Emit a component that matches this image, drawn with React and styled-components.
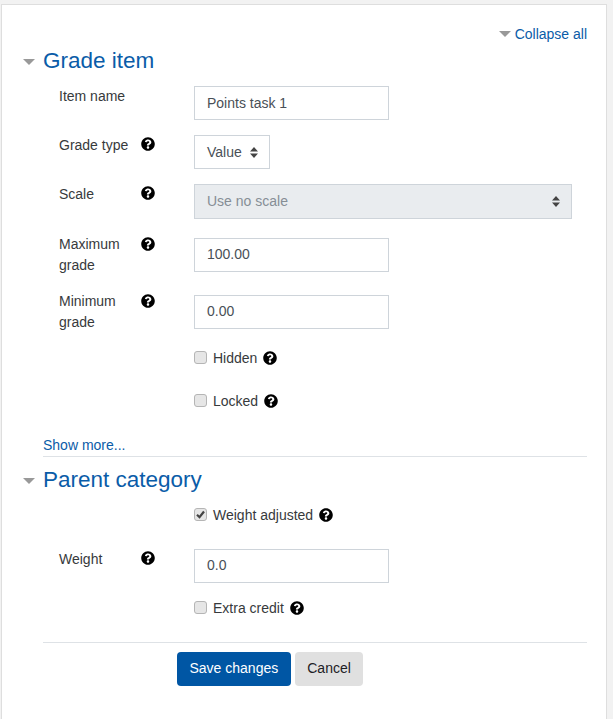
import React from "react";
import styled, { createGlobalStyle } from "styled-components";
import { FaQuestionCircle } from "react-icons/fa";

const Global = createGlobalStyle`
  html, body { margin: 0; padding: 0; background: #f2f2f2; height: 100%; overflow: hidden; }
  body { font-family: "Liberation Sans", Arial, sans-serif; font-size: 14px; color: #373a3c; }
`;

const Card = styled.form`
  margin: 4px 6px 0 1px;
  height: 760px;
  box-sizing: border-box;
  background: #fff;
  border: 1px solid #dedede;
  padding: 0 19px 0 41px;
`;

const CollapseRow = styled.div`
  display: flex;
  justify-content: flex-end;
  align-items: center;
  gap: 4px;
  height: 16px;
  padding-top: 21px;
`;

const Link = styled.a`
  display: block;
  color: #0a5ca8;
  line-height: 16px;
  margin-top: ${(p) => p.$mt || 0}px;
`;

const Caret = styled.span`
  display: inline-block;
  width: 0;
  height: 0;
  border-left: 6px solid transparent;
  border-right: 6px solid transparent;
  border-top: 6px solid #999;
`;

const SectionHeader = styled.div`
  position: relative;
  height: 27px;
  margin-top: ${(p) => p.$mt}px;
  display: flex;
  align-items: center;
`;

const SectionCaret = styled(Caret)`
  position: absolute;
  left: -20px;
  top: 50%;
  margin-top: -2px;
`;

const Title = styled.h3`
  margin: 0;
  font-size: 22.5px;
  font-weight: 400;
  line-height: 27px;
  color: #0a5ca8;
`;

const Row = styled.div`
  display: grid;
  grid-template-columns: 82px 1fr;
  padding-left: 16px;
  margin-top: ${(p) => p.$mt || 0}px;
`;

const LabelCell = styled.div`
  position: relative;
  line-height: 21px;
  width: 70px;
  margin-top: ${(p) => (p.$twoLine ? -4 : 0)}px;
`;

const HelpSlot = styled.span`
  position: absolute;
  left: 82px;
  top: ${(p) => (p.$twoLine ? 3 : 2)}px;
  display: flex;
`;

const Control = styled.div`
  grid-column: 2;
  margin-left: 53px;
  display: flex;
  align-items: flex-start;
`;

const HelpIcon = styled(FaQuestionCircle)`
  width: 14px;
  height: 14px;
  color: #000;
  display: block;
`;

const Input = styled.div`
  box-sizing: border-box;
  width: 195px;
  height: 34px;
  border: 1px solid #ced4da;
  padding: 0 12px;
  line-height: ${(p) => (p.$tight ? 30 : 32)}px;
  color: #495057;
  background: #fff;
`;

const Select = styled.div`
  box-sizing: border-box;
  width: ${(p) => p.$w}px;
  height: ${(p) => p.$h}px;
  border: 1px solid #ced4da;
  padding: 0 11px 0 12px;
  line-height: ${(p) => p.$h - 2}px;
  color: ${(p) => (p.$disabled ? "#868e96" : "#495057")};
  background: ${(p) => (p.$disabled ? "#e9ecef" : "#fff")};
  display: flex;
  justify-content: space-between;
  align-items: center;
`;

const Box = styled.span`
  box-sizing: border-box;
  width: 13px;
  height: 13px;
  border: 1px solid #b5b5b5;
  border-radius: 3px;
  background: #e6e6e6;
  display: flex;
  align-items: center;
  justify-content: center;
  flex: none;
`;

const Check = styled.label`
  display: flex;
  align-items: center;
  height: 21px;
  margin-top: ${(p) => p.$mt || 0}px;
  padding-left: 151px;
`;

const CheckText = styled.span`
  margin: 0 6px;
`;

const Rule = styled.hr`
  border: 0;
  border-top: 1px solid #dee2e6;
  margin: ${(p) => p.$m};
`;

const Actions = styled.div`
  display: flex;
  gap: 4px;
  margin: 9px 0 0 134px;
`;

const Button = styled.button`
  height: 34px;
  box-sizing: border-box;
  border: 0;
  border-radius: 4px;
  padding: 0 12.5px 2px;
  font: 14px "Liberation Sans", Arial, sans-serif;
  color: ${(p) => (p.$primary ? "#fff" : "#1d2125")};
  background: ${(p) => (p.$primary ? "#0056a4" : "#e0e0e0")};
`;

const Updown = () => (
  <svg width="8" height="11" viewBox="0 0 8 11" fill="#444">
    <path d="M4 0 L8 4.5 L0 4.5 Z M4 11 L8 6.5 L0 6.5 Z" />
  </svg>
);

const Tick = () => (
  <svg width="11" height="11" viewBox="0 0 11 11" fill="none" stroke="#444" strokeWidth="2.2">
    <path d="M2 5.8 L4.5 8.2 L9 2.5" />
  </svg>
);

const FormRow = ({ label, help, mt, twoLine, children }) => (
  <Row $mt={mt}>
    <LabelCell $twoLine={twoLine}>
      {label}
      {help && (
        <HelpSlot $twoLine={twoLine}>
          <HelpIcon />
        </HelpSlot>
      )}
    </LabelCell>
    <Control>{children}</Control>
  </Row>
);

const CheckRow = ({ label, checked, mt }) => (
  <Check $mt={mt}>
    <Box>{checked && <Tick />}</Box>
    <CheckText>{label}</CheckText>
    <HelpIcon />
  </Check>
);

export default function App() {
  return (
    <>
      <Global />
      <Card>
        <CollapseRow>
          <Caret />
          <Link>Collapse all</Link>
        </CollapseRow>
        <SectionHeader $mt={5}>
          <SectionCaret />
          <Title>Grade item</Title>
        </SectionHeader>
        <FormRow label="Item name" mt={12}>
          <Input>Points task 1</Input>
        </FormRow>
        <FormRow label="Grade type" help mt={15}>
          <Select $w={76} $h={34}>
            Value <Updown />
          </Select>
        </FormRow>
        <FormRow label="Scale" help mt={15}>
          <Select $w={378} $h={35} $disabled>
            Use no scale <Updown />
          </Select>
        </FormRow>
        <FormRow label="Maximum grade" help twoLine mt={19}>
          <Input $tight>100.00</Input>
        </FormRow>
        <FormRow label="Minimum grade" help twoLine mt={19}>
          <Input $tight>0.00</Input>
        </FormRow>
        <CheckRow label="Hidden" mt={14} />
        <CheckRow label="Locked" mt={22} />
        <Link $mt={26}>Show more...</Link>
        <Rule $m="3px 0 0" />
        <SectionHeader $mt={9}>
          <SectionCaret />
          <Title>Parent category</Title>
        </SectionHeader>
        <CheckRow label="Weight adjusted" checked mt={11} />
        <FormRow label="Weight" help mt={24}>
          <Input $tight>0.0</Input>
        </FormRow>
        <CheckRow label="Extra credit" mt={14} />
        <Rule $m="24px 0 0" />
        <Actions>
          <Button $primary>Save changes</Button>
          <Button>Cancel</Button>
        </Actions>
      </Card>
    </>
  );
}
